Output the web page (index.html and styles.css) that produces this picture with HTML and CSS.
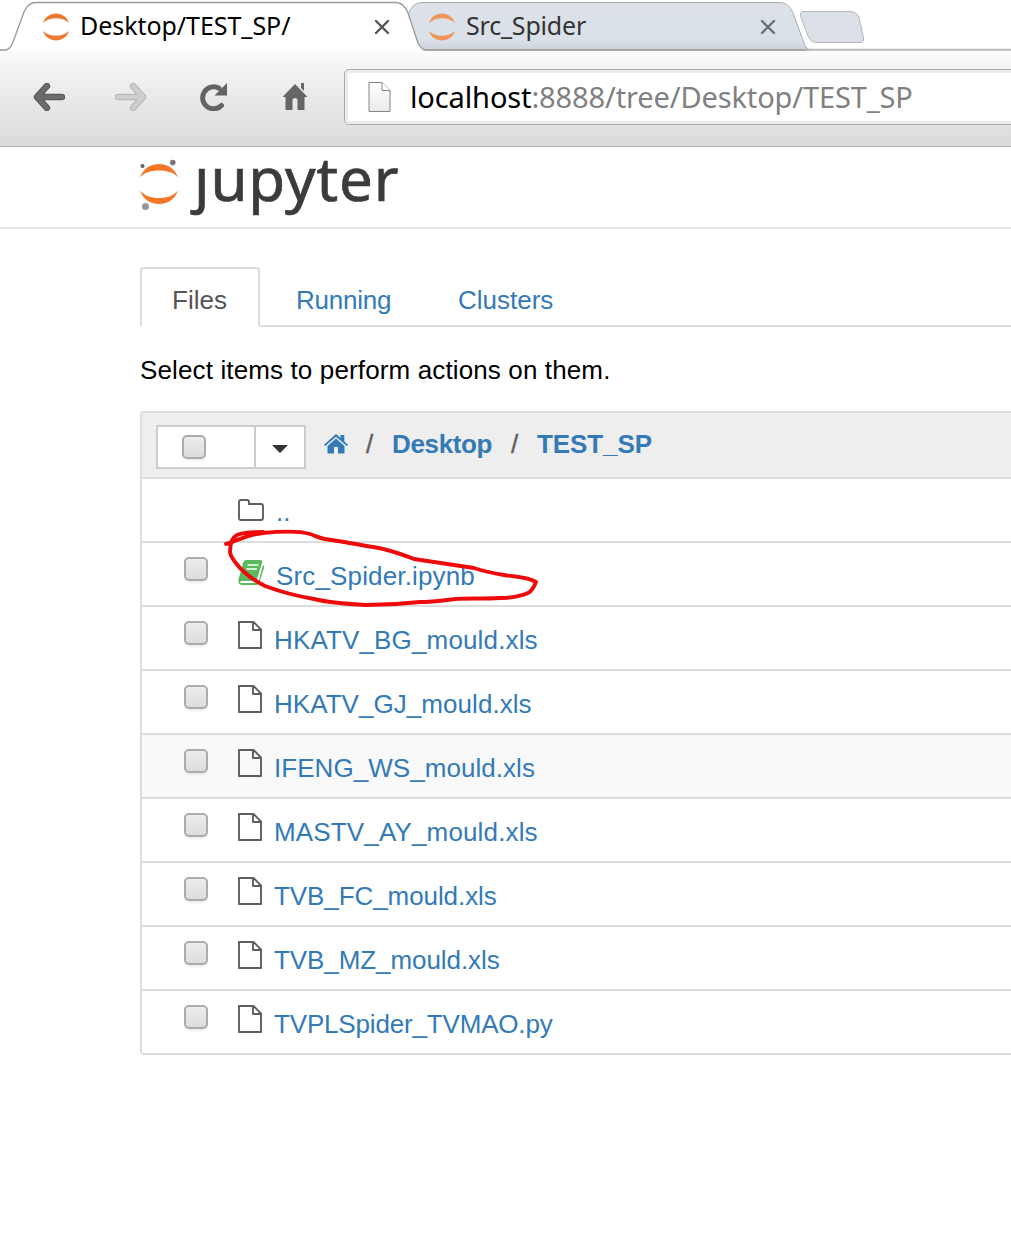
FILE: index.html
```html
<!DOCTYPE html>
<html lang="en">
<head>
<meta charset="utf-8">
<title>Desktop/TEST_SP/</title>
<link rel="stylesheet" href="styles.css">
</head>
<body>
<svg class="defs" width="0" height="0" aria-hidden="true">
  <defs>
    <linearGradient id="page-fill" x1="0" y1="0" x2="0" y2="1"><stop offset="0" stop-color="#fff"/><stop offset="1" stop-color="#e9eaec"/></linearGradient>
    <symbol id="ring" viewBox="0 0 28 28"><path d="M1 10C3 4 8 .5 14 .5S25 4 27 10C24 6.800 19 5.200 14 5.200S4 6.800 1 10zM1 18c2 6 7 9.500 13 9.500S25 24 27 18c-3 3.200-8 4.800-13 4.800S4 21.200 1 18z"/></symbol>
    <symbol id="close" viewBox="0 0 16 16"><path d="M2 2l12 12M14 2L2 14" fill="none" stroke="currentColor" stroke-width="2.400" stroke-linecap="round"/></symbol>
    <symbol id="file" viewBox="0 0 24 28"><path d="M1 1h14.500L23 8.500V27H1zM15 1v8h8" fill="none" stroke="currentColor" stroke-width="1.900" stroke-linejoin="round"/></symbol>
  </defs>
</svg>

<header class="browser">
  <svg class="tab-shapes" width="1011" height="52" viewBox="0 0 1011 52" aria-hidden="true">
    <defs>
      <linearGradient id="tab-fill" x1="0" y1="0" x2="0" y2="1"><stop offset="0" stop-color="#dde2e9"/><stop offset=".8" stop-color="#dae0e7"/><stop offset="1" stop-color="#cdd3da"/></linearGradient>
    </defs>
    <path d="M408 15Q412 2.500 422 2.500H779Q789 2.500 793 13L804 43Q806 50 812 50H424Q419 50 417 43z" fill="url(#tab-fill)" stroke="#a9adb2"/>
    <path d="M0 50H5Q10 50 13 42L24 12Q28 2.500 36 2.500H396Q404 2.500 408 13L418 43Q421 50 427 50z" fill="#fff"/>
    <path d="M0 50H5Q10 50 13 42L24 12Q28 2.500 36 2.500H396Q404 2.500 408 13L418 43Q421 50 427 50H806" fill="none" stroke="#999" stroke-width="1.300"/>
    <path d="M806 49.700H1011" stroke="#b9b9b9" stroke-width="2"/>
    <path d="M804 11.500H850Q856 11.500 859 17L863.500 38Q864 42.500 860 42.500H816Q811 42.500 808 36L800.500 16Q799.500 11.500 804 11.500z" fill="#dbe0e7" stroke="#b4b8be"/>
  </svg>
  <div class="tabs">
    <div class="tab tab-active"><svg class="tab-icon"><use href="#ring"/></svg><span class="tab-title title-a">Desktop/TEST_SP/</span><svg class="tab-close"><use href="#close"/></svg></div>
    <div class="tab tab-back"><svg class="tab-icon"><use href="#ring"/></svg><span class="tab-title title-b">Src_Spider</span><svg class="tab-close"><use href="#close"/></svg></div>
  </div>
  <div class="toolbar">
    <svg class="tool" viewBox="0 0 32 28"><path d="M14 3L4 14l10 11M5 14h24" fill="none" stroke="#555" stroke-width="6.400" stroke-linecap="round" stroke-linejoin="round"/><path d="M14 3L4 14l10 11M5 14h24" fill="none" stroke="#6c6c6c" stroke-width="4.400" stroke-linecap="round" stroke-linejoin="round"/></svg>
    <svg class="tool" viewBox="0 0 32 28"><path d="M18 3l10 11-10 11M27 14H3" fill="none" stroke="#b5b5b5" stroke-width="6.400" stroke-linecap="round" stroke-linejoin="round"/><path d="M18 3l10 11-10 11M27 14H3" fill="none" stroke="#cecece" stroke-width="4.400" stroke-linecap="round" stroke-linejoin="round"/></svg>
    <svg class="tool" viewBox="0 0 32 28"><path d="M24.500 22.500A11 11 0 1 1 22 5.200" fill="none" stroke="#636363" stroke-width="5" stroke-linecap="round"/><path d="M30 0V12.500H17.500z" fill="#636363"/></svg>
    <svg class="tool" viewBox="0 0 32 28"><path d="M16 1L28.500 14H25.500V27H18.500V17.500Q18.500 15 16 15T13.500 17.500V27H6.500V14H3.500z" fill="#666"/><path d="M22 0h3v8l-3-3z" fill="#666"/></svg>
    <div class="address">
      <svg class="page-icon" viewBox="0 0 24 32"><path d="M1.500 1.500H14.500L22.500 9.500V30.500H1.500z" fill="url(#page-fill)" stroke="#858585"/><path d="M14.500 1.500V9.500H22.500" fill="#fff" stroke="#858585"/></svg>
      <span class="url"><span class="host">localhost</span>:8888/tree/Desktop/TEST_SP</span>
    </div>
  </div>
</header>

<div class="brand">
  <svg class="brand-mark" width="42" height="54" viewBox="0 0 42 54" aria-hidden="true">
    <path d="M1 18.500C4 10 11 5 20 5S36 10 39 18.500C35 13.500 28 11.500 20 11.500S5 13.500 1 18.500zM1 31.500C4 40 11 45 20 45S36 40 39 31.500C35 36.500 28 39 20 39S5 36.500 1 31.500z" fill="#f37726"/>
    <circle cx="3.500" cy="7" r="2.100" fill="#616262"/><circle cx="33.800" cy="3.600" r="2.800" fill="#767677"/><circle cx="6.500" cy="47.500" r="3.500" fill="#989798"/>
  </svg>
  <span class="brand-name" role="img" aria-label="jupyter">ȷupyter</span>
</div>

<main class="content">
  <nav class="nav"><a class="nav-item current">Files</a><a class="nav-item running">Running</a><a class="nav-item clusters">Clusters</a></nav>
  <p class="hint">Select items to perform actions on them.</p>

  <section class="list">
    <div class="list-head">
      <div class="selector"><span class="select-all"><i class="check"></i></span><span class="select-menu"><i class="caret"></i></span></div>
      <div class="crumbs">
        <svg class="crumb-home" viewBox="0 0 24 20"><path d="M12 4.500L20.500 12V19.500H14V13H10V19.500H3.500V12z"/><path d="M12 0L16.500 4V1H20.300V7.400L24 10.700L22.800 12L12 2.700L1.200 12L0 10.700z"/></svg>
        <span class="slash">/</span><a class="crumb desk">Desktop</a><span class="slash">/</span><a class="crumb">TEST_SP</a>
      </div>
    </div>
    <div class="row parent"><svg class="folder" viewBox="0 0 26 22"><path d="M1 3Q1 1 3 1H9Q11 1 11 3V5H23Q25 5 25 7V19Q25 21 23 21H3Q1 21 1 19z" fill="none" stroke="currentColor" stroke-width="1.900"/></svg><a class="name">..</a></div>
    <div class="row notebook"><i class="check"></i><svg class="book" viewBox="0 0 26 25"><path d="M8 0H22Q25 0 24 3L19 19Q18 21 16 21H4Q1.500 21 2.500 23H18Q20 23 21 20L25 5Q26.500 6 26 8L21.500 22Q20.500 25 18 25H4Q0 25 .4 20L5 3Q6 0 8 0z" fill="#5cb85c"/><path d="M9.500 5H20.500M8.500 9H19" stroke="#fff" stroke-width="1.500"/></svg><a class="name">Src_Spider.ipynb</a></div>
    <div class="row"><i class="check"></i><svg class="file"><use href="#file"/></svg><a class="name">HKATV_BG_mould.xls</a></div>
    <div class="row"><i class="check"></i><svg class="file"><use href="#file"/></svg><a class="name snug">HKATV_GJ_mould.xls</a></div>
    <div class="row hovered"><i class="check"></i><svg class="file"><use href="#file"/></svg><a class="name snug">IFENG_WS_mould.xls</a></div>
    <div class="row"><i class="check"></i><svg class="file"><use href="#file"/></svg><a class="name">MASTV_AY_mould.xls</a></div>
    <div class="row"><i class="check"></i><svg class="file"><use href="#file"/></svg><a class="name tight">TVB_FC_mould.xls</a></div>
    <div class="row"><i class="check"></i><svg class="file"><use href="#file"/></svg><a class="name tight">TVB_MZ_mould.xls</a></div>
    <div class="row"><i class="check"></i><svg class="file"><use href="#file"/></svg><a class="name tighter">TVPLSpider_TVMAO.py</a></div>
  </section>
</main>

<!-- hand-drawn marker around the notebook -->
<svg class="marker" width="320" height="84" viewBox="220 525 320 84" aria-hidden="true"><path d="M226 544C237 541 245 535 263 533C283 531 300 531 310 534C316 536 319 538 325 539C346 542 359 545 373 547C392 550 403 555 414 559C434 562 454 565 474 568C483 571 492 573 504 575C516 577 528 577 536 582C534 587 532 591 528 593C519 597 509 598 499 598C483 599 468 598 455 599C445 600 434 602 420 602C402 604 384 605 366 605C348 604 330 603 314 599C297 596 281 592 265 586C251 579 241 570 235 562C230 554 231 557 230 552C230 545 231 538 237 535C243 532 252 532 263 532"/></svg>
</body>
</html>
```

FILE: styles.css
```css
* { box-sizing: border-box; }
body { margin: 0; width: 1011px; height: 1253px; overflow: hidden; position: relative; background: #fff; color: #000; font-family: "Liberation Sans", Arial, sans-serif; font-size: 26px; }
svg { display: block; flex: none; }
.defs { position: absolute; }

.browser { position: relative; height: 147px; background: linear-gradient(#fff 46px, #f4f4f4 66px, #dcdcdc 140px); border-bottom: 1px solid #b0b0b0; font-family: "Noto Sans", "Open Sans", sans-serif; }
.tab-shapes { position: absolute; left: 0; top: 0; }
.tabs { position: relative; display: flex; height: 51px; padding-left: 42px; }
.tab { display: flex; align-items: center; width: 386px; height: 53px; }
.tab-icon { width: 28px; height: 28px; fill: #ec7a30; }
.tab-title { width: 292px; margin-left: 10px; margin-top: -3px; line-height: 50px; font-size: 25px; white-space: nowrap; }
.title-a { letter-spacing: -.05px; }
.title-b { letter-spacing: -.2px; color: #333; }
.tab-back .tab-icon { fill: #f1965a; }
.tab-close { width: 16px; height: 16px; margin-left: 2px; color: #555; }
.tab-back .tab-close { color: #6b7078; }

.toolbar { position: relative; display: flex; align-items: center; height: 92px; padding-left: 33px; }
.tool { width: 32px; height: 28px; margin-right: 50px; }
.address { display: flex; align-items: center; flex: 1; height: 56px; margin-left: -17px; margin-right: -6px; padding-left: 21px; background: #fff; border: 1px solid #a9a9a9; border-radius: 5px; box-shadow: inset 0 0 0 3px #ececec; }
.page-icon { width: 27px; height: 32px; }
.url { margin-left: 17px; margin-top: -1px; font-size: 29px; line-height: 50px; letter-spacing: -.12px; color: #808080; white-space: nowrap; }
.host { color: #000; }

.brand { display: flex; height: 82px; padding: 12px 0 0 139px; border-bottom: 2px solid #e7e7e7; }
.brand-name { margin-left: 13px; margin-top: -11px; font: 400 60px/60px "Noto Sans", "Open Sans", sans-serif; letter-spacing: .9px; color: #3b3b3b; -webkit-text-stroke: .7px #3b3b3b; }

.content { padding: 38px 0 0 140px; }
.nav { display: flex; height: 60px; border-bottom: 2px solid #ddd; }
.nav-item { height: 60px; line-height: 62px; color: #337ab7; }
.current { width: 120px; padding-left: 30px; color: #555; border: 2px solid #ddd; border-bottom-color: #fff; border-radius: 4px 4px 0 0; background: #fff; }
.running { margin-left: 36px; width: 162px; line-height: 66px; letter-spacing: -.25px; }
.clusters { line-height: 66px; }
.hint { margin: 23px 0 0; height: 61px; line-height: 40px; letter-spacing: .13px; }

.list { width: 900px; border: 2px solid #ddd; border-radius: 4px; }
.list-head { display: flex; height: 64px; background: #eee; padding: 12px 0 0 14px; }
.selector { display: flex; width: 150px; height: 44px; background: #fff; border: 2px solid #ccc; }
.select-all { display: flex; width: 98px; padding: 8px 0 0 24px; border-right: 2px solid #ccc; }
.select-menu { flex: 1; display: flex; justify-content: center; padding-top: 18px; }
.caret { width: 0; height: 0; border: 8px solid transparent; border-top-color: #333; border-bottom: 0; }
.check { flex: none; width: 24px; height: 24px; border: 2px solid #acacac; border-radius: 5px; background: linear-gradient(#ededed, #dcdcdc); box-shadow: 0 2px 2px #0001; }
.crumbs { display: flex; margin-left: 18px; height: 38px; line-height: 38px; font-weight: bold; }
.crumb-home { width: 24px; height: 20px; margin-top: 9px; fill: #337ab7; }
.slash { width: 44px; padding-left: 18px; color: #5e5e5e; font-weight: normal; -webkit-text-stroke: .4px #5e5e5e; }
.crumb { color: #337ab7; letter-spacing: -.1px; }
.desk { width: 101px; letter-spacing: -.35px; }
.row { display: flex; height: 64px; border-top: 2px solid #ddd; padding: 14px 0 0 42px; }
.file { width: 24px; height: 28px; margin: 0 0 0 30px; color: #5e5e5e; }
.name { margin-left: 12px; height: 36px; line-height: 38px; color: #337ab7; letter-spacing: .15px; }
.snug { letter-spacing: .05px; }
.tight { letter-spacing: -.08px; }
.tighter { letter-spacing: -.17px; }
.hovered { background: #f9f9f9; }
.parent { padding-left: 96px; }
.folder { width: 26px; height: 22px; margin-top: 6px; color: #5e5e5e; }
.book { width: 26px; height: 25px; margin: 3px 0 0 30px; }

.marker { position: absolute; left: 220px; top: 525px; fill: none; stroke: #ee0a0a; stroke-width: 3.9; stroke-linecap: round; stroke-linejoin: round; }
```
